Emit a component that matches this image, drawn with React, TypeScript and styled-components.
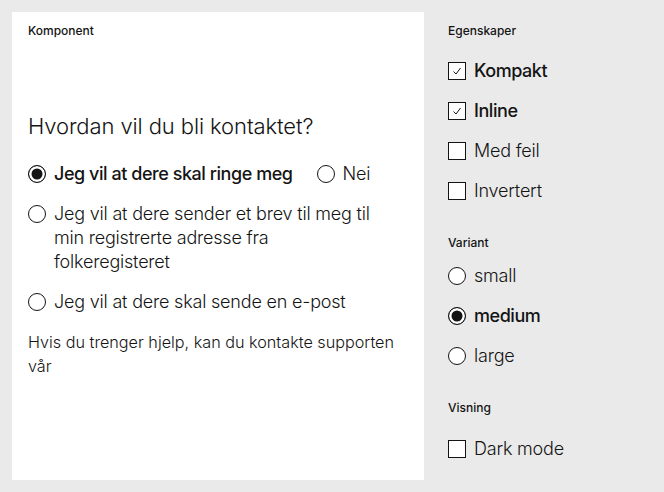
import React from 'react';
import styled, { createGlobalStyle } from 'styled-components';

const GlobalStyle = createGlobalStyle`
  html, body {
    margin: 0;
    padding: 0;
    background: #eaeaea;
  }
  body {
    font-family: Inter, 'Liberation Sans', sans-serif;
    color: #141414;
  }
`;

const Page = styled.div`
  box-sizing: border-box;
  display: grid;
  grid-template-columns: 412px 1fr;
  grid-template-rows: 100%;
  gap: 24px;
  padding: 12px;
  height: 492px;
`;

const Panel = styled.div`
  background: #fff;
  padding: 10px 16px;
  display: flex;
  flex-direction: column;
`;

const Side = styled.div`
  padding-top: 10px;
  display: flex;
  flex-direction: column;
`;

const Caption = styled.div`
  font-size: 12px;
  font-weight: 450;
  line-height: 17px;
  height: 17px;
`;

const Heading = styled.h2`
  margin: 71px 0 20px;
  font-size: 22px;
  font-weight: 300;
  line-height: 32px;
  letter-spacing: -0.1px;
`;

const Options = styled.div`
  display: flex;
  flex-wrap: wrap;
  column-gap: 24px;
  row-gap: 16px;
`;

const Option = styled.label<{ $selected?: boolean }>`
  display: flex;
  align-items: flex-start;
  gap: 8px;
  font-size: 18px;
  line-height: 24px;
  font-weight: ${(p) => (p.$selected ? 500 : 300)};
  letter-spacing: ${(p) => (p.$selected ? '-0.45px' : '-0.2px')};
  max-width: 360px;
`;

const Radio = styled.span<{ $on?: boolean }>`
  flex: none;
  width: 18px;
  height: 18px;
  margin-top: 3px;
  box-sizing: border-box;
  border-radius: 50%;
  border: 1.5px solid #141414;
  background: ${(p) => (p.$on ? '#141414' : '#fff')};
  box-shadow: ${(p) => (p.$on ? 'inset 0 0 0 2.5px #fff' : 'none')};
`;

const Box = styled.span`
  flex: none;
  width: 18px;
  height: 18px;
  margin-top: 3px;
  box-sizing: border-box;
  border: 1.5px solid #141414;
  background: #fff;
  display: flex;
  align-items: center;
  justify-content: center;
`;

const Help = styled.p`
  margin: 16px 0 0;
  font-size: 16.2px;
  font-weight: 300;
  line-height: 24px;
  max-width: 370px;
`;

const SideGroup = styled.div<{ $top?: number }>`
  display: flex;
  flex-direction: column;
  gap: 16px;
  margin-top: ${(p) => p.$top ?? 20}px;
  margin-bottom: 31px;
`;

function Check({ on }: { on?: boolean }) {
  return (
    <Box>
      {on ? (
        <svg width="12" height="12" viewBox="0 0 12 12">
          <path d="M2.5 6.5 L5 9 L9.5 3" fill="none" stroke="#141414" strokeWidth="1" />
        </svg>
      ) : null}
    </Box>
  );
}

export default function App() {
  return (
    <>
      <GlobalStyle />
      <Page>
        <Panel>
          <Caption>Komponent</Caption>
          <Heading>Hvordan vil du bli kontaktet?</Heading>
          <Options>
            <Option $selected>
              <Radio $on />
              Jeg vil at dere skal ringe meg
            </Option>
            <Option>
              <Radio />
              Nei
            </Option>
            <Option>
              <Radio />
              Jeg vil at dere sender et brev til meg til min registrerte adresse fra folkeregisteret
            </Option>
            <Option>
              <Radio />
              Jeg vil at dere skal sende en e-post
            </Option>
          </Options>
          <Help>Hvis du trenger hjelp, kan du kontakte supporten vår</Help>
        </Panel>
        <Side>
          <Caption>Egenskaper</Caption>
          <SideGroup>
            <Option $selected>
              <Check on />
              Kompakt
            </Option>
            <Option $selected>
              <Check on />
              Inline
            </Option>
            <Option>
              <Check />
              Med feil
            </Option>
            <Option>
              <Check />
              Invertert
            </Option>
          </SideGroup>
          <Caption>Variant</Caption>
          <SideGroup $top={13}>
            <Option>
              <Radio />
              small
            </Option>
            <Option $selected>
              <Radio $on />
              medium
            </Option>
            <Option>
              <Radio />
              large
            </Option>
          </SideGroup>
          <Caption>Visning</Caption>
          <SideGroup $top={21}>
            <Option>
              <Check />
              Dark mode
            </Option>
          </SideGroup>
        </Side>
      </Page>
    </>
  );
}
